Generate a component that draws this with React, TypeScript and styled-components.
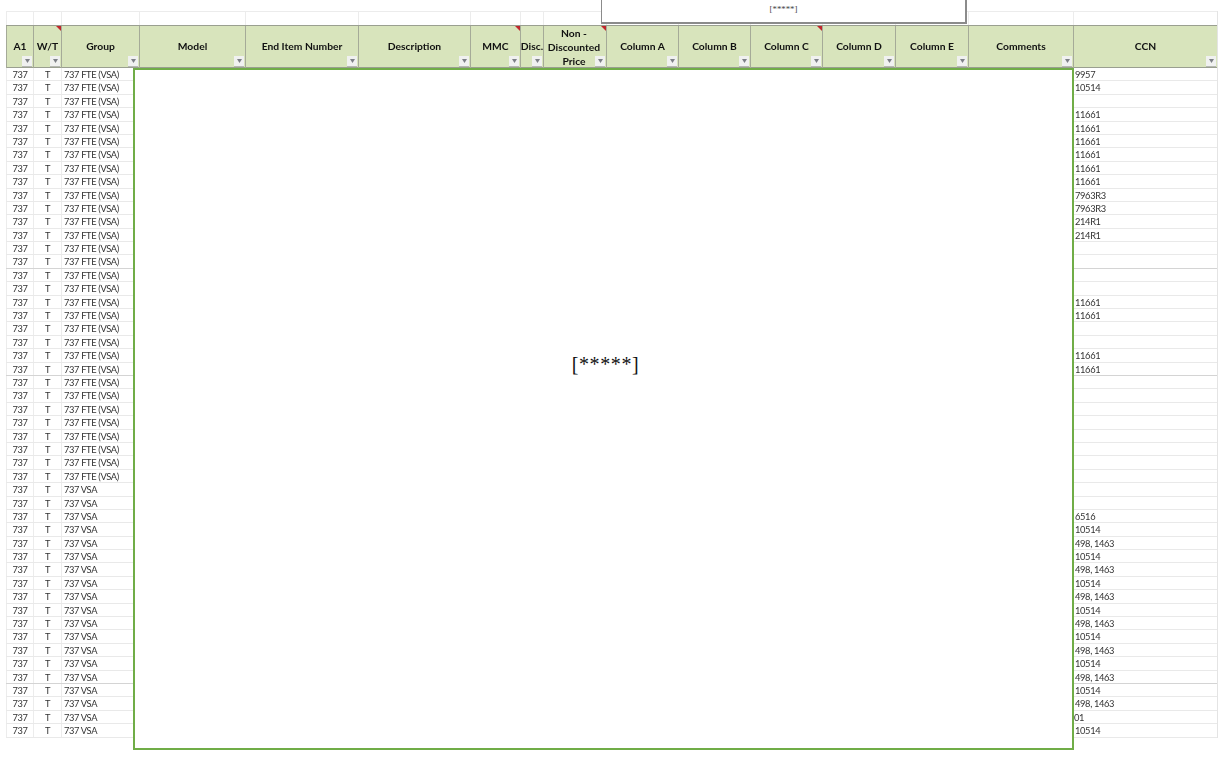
import React from "react";
import styled, { createGlobalStyle } from "styled-components";

const Global = createGlobalStyle`
  html, body { margin: 0; padding: 0; background: #fff; }
  body { font-family: Lato, "Liberation Sans", sans-serif; overflow: hidden; }
`;

const columns = "27px 28px 78px 106px 113px 112px 50px 23px 63px 72px 72px 72px 73px 73px 105px 144px";

const Page = styled.div`
  position: relative;
  width: 1231px;
  height: 768px;
  padding: 11px 0 0 6px;
  box-sizing: border-box;
  overflow: hidden;
  filter: blur(0.3px);
`;

const Sheet = styled.div`
  width: 1211px;
  display: flex;
  flex-direction: column;
  border-right: 1px solid #e4e4e4;
`;

const SpacerRow = styled.div`
  display: grid;
  grid-template-columns: ${columns};
  height: 14px;
  border-top: 1px solid #ececec;
  box-sizing: border-box;
`;

const SpacerCell = styled.div`
  border-left: 1px solid #ececec;
`;

const HeaderRow = styled.div`
  display: grid;
  grid-template-columns: ${columns};
  height: 43px;
  background: #d8e4bc;
  border-top: 1px solid #9a9f90;
  border-bottom: 1px solid #9a9f90;
  box-sizing: border-box;
`;

const HeaderCell = styled.div<{ $tall?: boolean }>`
  position: relative;
  display: flex;
  align-items: center;
  justify-content: center;
  text-align: center;
  padding-bottom: ${(p) => (p.$tall ? "0" : "3px")};
  padding-right: ${(p) => (p.$tall ? "2px" : "0")};
  border-left: 1px solid #a5aa98;
  font-size: 10.3px;
  font-weight: 700;
  line-height: 14px;
  color: #111;
  box-sizing: border-box;
`;

const FilterButton = styled.span`
  position: absolute;
  right: 1px;
  bottom: 1px;
  width: 10px;
  height: 11px;
  display: flex;
  align-items: center;
  justify-content: center;
  background: #f0f1f0;
  border-bottom: 1px solid #b5b8b2;
  box-sizing: border-box;
`;

const Arrow = styled.svg`
  width: 5px;
  height: 4px;
  display: block;
`;

const Note = styled.svg`
  position: absolute;
  top: 0;
  right: 0;
  width: 5px;
  height: 5px;
`;

const Row = styled.div<{ $heavy?: boolean }>`
  display: grid;
  grid-template-columns: ${columns};
  height: 13.4px;
  border-bottom: 1px solid ${(p) => (p.$heavy ? "#d4d4d4" : "#e9e9e9")};
  box-sizing: border-box;
  font-size: 9.3px;
  line-height: 14px;
  letter-spacing: -0.35px;
  color: #333;
`;

const Cell = styled.div<{ $align?: string; $column?: number; $inset?: number }>`
  border-left: 1px solid #ececec;
  text-align: ${(p) => p.$align || "left"};
  padding-left: ${(p) => (p.$align === "center" ? 0 : p.$inset ?? 2)}px;
  white-space: nowrap;
  overflow: hidden;
  ${(p) => (p.$column ? `grid-column: ${p.$column};` : "")}
`;

const GreenPanel = styled.div`
  position: absolute;
  left: 133px;
  top: 68px;
  width: 941px;
  height: 682px;
  box-sizing: border-box;
  background: #fff;
  border: 2px solid #70ad47;
  display: flex;
  align-items: flex-start;
  justify-content: center;
  padding: 283px 0 0 4px;
  font-family: "Liberation Serif", serif;
  font-size: 20px;
  line-height: 22px;
  letter-spacing: 0.6px;
  color: #111;
`;

const TopPanel = styled.div`
  position: absolute;
  left: 601px;
  top: -2px;
  width: 366px;
  height: 26px;
  box-sizing: border-box;
  background: #fff;
  border: 1px solid #8b8b8b;
  border-bottom-width: 2px;
  border-right-width: 2px;
  display: flex;
  align-items: flex-end;
  justify-content: center;
  padding-bottom: 8px;
  font-family: "Liberation Serif", serif;
  font-size: 8.8px;
  line-height: 9px;
  color: #444;
`;

const headers: { label: React.ReactNode; note?: boolean; tall?: boolean }[] = [
  { label: "A1" },
  { label: "W/T", note: true },
  { label: "Group" },
  { label: "Model" },
  { label: "End Item Number" },
  { label: "Description" },
  { label: "MMC", note: true },
  { label: "Disc." },
  { label: <>Non -<br />Discounted<br />Price</>, note: true, tall: true },
  { label: "Column A" },
  { label: "Column B" },
  { label: "Column C", note: true },
  { label: "Column D" },
  { label: "Column E" },
  { label: "Comments" },
  { label: "CCN" },
];

const ccn: Record<number, string> = {
  1: "9957",
  2: "10514",
  4: "11661",
  5: "11661",
  6: "11661",
  7: "11661",
  8: "11661",
  9: "11661",
  10: "7963R3",
  11: "7963R3",
  12: "214R1",
  13: "214R1",
  18: "11661",
  19: "11661",
  22: "11661",
  23: "11661",
  34: "6516",
  49: "01",
  50: "10514",
};

const ccnFor = (n: number) => {
  if (ccn[n]) return ccn[n];
  if (n >= 35 && n <= 48) return n % 2 === 1 ? "10514" : "498, 1463";
  return "";
};

const rows = Array.from({ length: 50 }, (_, i) => i + 1);

export default function App() {
  return (
    <Page>
      <Global />
      <Sheet>
        <SpacerRow>
          {headers.map((_, i) => (
            <SpacerCell key={i} />
          ))}
        </SpacerRow>
        <HeaderRow>
          {headers.map((h, i) => (
            <HeaderCell key={i} $tall={h.tall}>
              {h.note && (
                <Note viewBox="0 0 5 5">
                  <polygon points="0,0 5,0 5,5" fill="#c0272d" />
                </Note>
              )}
              <span>{h.label}</span>
              <FilterButton>
                <Arrow viewBox="0 0 5 4">
                  <polygon points="0,0 5,0 2.5,4" fill="#7d8087" />
                </Arrow>
              </FilterButton>
            </HeaderCell>
          ))}
        </HeaderRow>
        {rows.map((n) => (
          <Row key={n} $heavy={n === 15 || n === 23 || n === 46}>
            <Cell $align="center">737</Cell>
            <Cell $align="center">T</Cell>
            <Cell>{n <= 31 ? "737 FTE (VSA)" : "737 VSA"}</Cell>
            <Cell $column={16} $inset={n === 49 ? 0 : 1}>{ccnFor(n)}</Cell>
          </Row>
        ))}
      </Sheet>
      <GreenPanel>[*****]</GreenPanel>
      <TopPanel>[*****]</TopPanel>
    </Page>
  );
}
